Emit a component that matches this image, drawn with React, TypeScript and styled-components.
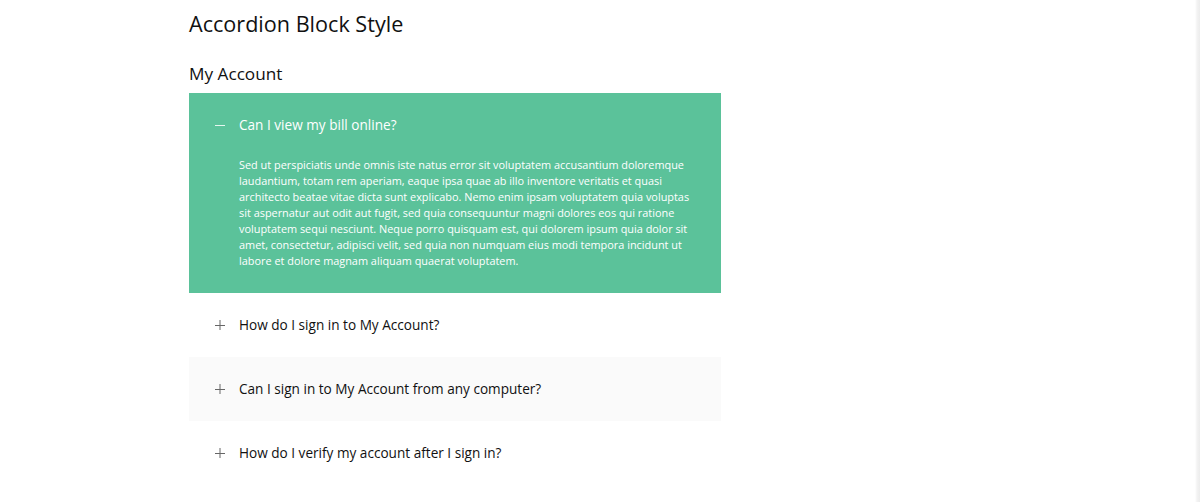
import React, { useState } from "react";
import styled, { createGlobalStyle } from "styled-components";

const GlobalStyle = createGlobalStyle`
  html, body {
    margin: 0;
    padding: 0;
    background: linear-gradient(to right, #fff calc(100% - 5px), #f3f3f3 calc(100% - 3px), #ececec);
    font-family: "Open Sans", "Noto Sans", sans-serif;
    color: #111;
  }
`;

const Page = styled.div`
  min-height: 502px;
  padding: 8px 0 0 189px;
  box-sizing: border-box;
`;

const Title = styled.h1`
  margin: 0;
  font-size: 21.6px;
  font-weight: 400;
  line-height: 32px;
  color: #111;
`;

const GroupTitle = styled.h2`
  margin: 22px 0 0;
  font-size: 17.2px;
  font-weight: 400;
  line-height: 24px;
  color: #111;
`;

const Accordion = styled.div`
  width: 532px;
  margin-top: 7px;
  display: flex;
  flex-direction: column;
`;

const Item = styled.div<{ $open: boolean; $shaded: boolean }>`
  background: ${({ $open, $shaded }) => ($open ? "#5bc29a" : $shaded ? "#fafafa" : "#fff")};
  color: ${({ $open }) => ($open ? "#fff" : "#111")};
`;

const Header = styled.button`
  all: unset;
  box-sizing: border-box;
  width: 100%;
  height: 64px;
  padding: 0 0 1px 26px;
  display: flex;
  align-items: center;
  gap: 14px;
  cursor: pointer;
  font-family: "Open Sans", "Noto Sans", sans-serif;
  font-size: 13.6px;
  color: inherit;
`;

const Sign = styled.span<{ $open: boolean }>`
  width: 10px;
  height: 10px;
  display: flex;
  align-items: center;
  justify-content: center;
  color: ${({ $open }) => ($open ? "#e6f6ef" : "#666")};
`;

const Body = styled.div`
  padding: 0 30px 24px 50px;
  font-size: 10.9px;
  line-height: 16px;
  color: #fff;
`;

const PlusMinus = ({ open }: { open: boolean }) => (
  <svg width="10" height="10" viewBox="0 0 10 10">
    <path d="M0 5.5h10" stroke="currentColor" strokeWidth="1" />
    {!open && <path d="M5 0v10" stroke="currentColor" strokeWidth="1" />}
  </svg>
);

const items = [
  {
    q: "Can I view my bill online?",
    a: "Sed ut perspiciatis unde omnis iste natus error sit voluptatem accusantium doloremque laudantium, totam rem aperiam, eaque ipsa quae ab illo inventore veritatis et quasi architecto beatae vitae dicta sunt explicabo. Nemo enim ipsam voluptatem quia voluptas sit aspernatur aut odit aut fugit, sed quia consequuntur magni dolores eos qui ratione voluptatem sequi nesciunt. Neque porro quisquam est, qui dolorem ipsum quia dolor sit amet, consectetur, adipisci velit, sed quia non numquam eius modi tempora incidunt ut labore et dolore magnam aliquam quaerat voluptatem.",
  },
  { q: "How do I sign in to My Account?", a: "" },
  { q: "Can I sign in to My Account from any computer?", a: "" },
  { q: "How do I verify my account after I sign in?", a: "" },
];

const App = () => {
  const [open, setOpen] = useState<number | null>(0);

  return (
    <Page>
      <GlobalStyle />
      <Title>Accordion Block Style</Title>
      <GroupTitle>My Account</GroupTitle>
      <Accordion>
        {items.map((item, i) => {
          const isOpen = open === i;
          return (
            <Item key={i} $open={isOpen} $shaded={i % 2 === 0}>
              <Header onClick={() => setOpen(isOpen ? null : i)}>
                <Sign $open={isOpen}>
                  <PlusMinus open={isOpen} />
                </Sign>
                {item.q}
              </Header>
              {isOpen && <Body>{item.a}</Body>}
            </Item>
          );
        })}
      </Accordion>
    </Page>
  );
};

export default App;
